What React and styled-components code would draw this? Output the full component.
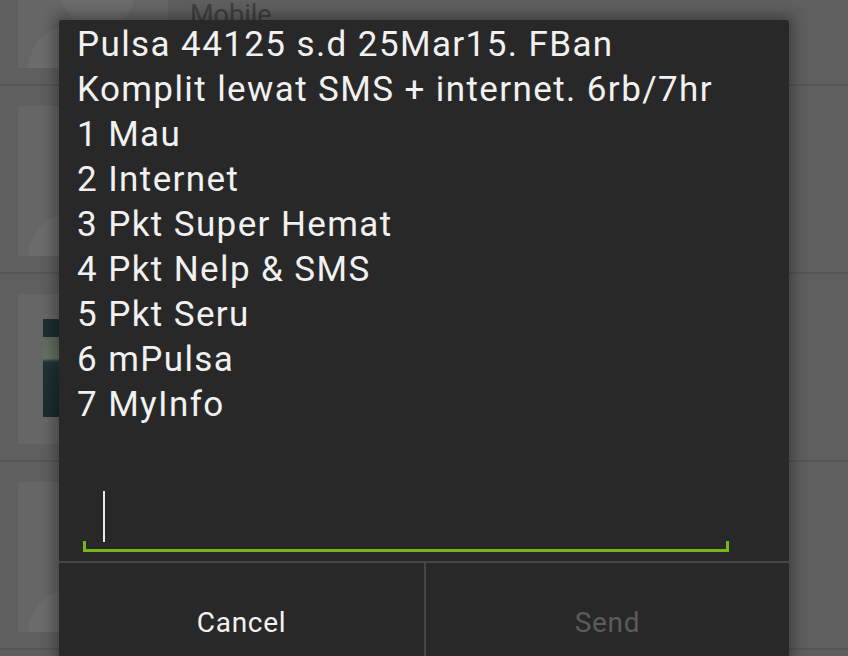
import React from "react";
import styled, { createGlobalStyle } from "styled-components";

const Global = createGlobalStyle`
  html, body { margin: 0; padding: 0; background: #606060; }
  body { width: 848px; height: 656px; overflow: hidden; font-family: Roboto, "Noto Sans", sans-serif; }
  * { box-sizing: border-box; }
`;

const Screen = styled.div`
  position: relative;
  width: 848px;
  height: 656px;
  overflow: hidden;
  background: #5f5f5f;
`;

const ContactList = styled.div`
  display: flex;
  flex-direction: column;
  margin-top: -102px;
`;

const ContactRow = styled.div`
  display: flex;
  align-items: flex-start;
  gap: 22px;
  height: 188px;
  padding: 20px 0 0 18px;
  border-bottom: 2px solid #565656;
`;

const Avatar = styled.div`
  position: relative;
  flex: none;
  width: 150px;
  height: 150px;
  background: #666666;
  overflow: hidden;
`;

const Photo = styled.div`
  position: absolute;
  left: 25px;
  top: 25px;
  width: 100px;
  height: 98px;
  background: linear-gradient(
    to bottom,
    #1c2f33 0%,
    #1c2f33 18%,
    #5e6a5e 18%,
    #6b7262 40%,
    #1f3438 44%,
    #1a2c30 100%
  );
`;

const Info = styled.div`
  display: flex;
  flex-direction: column;
  padding-top: 80px;
`;

const Label = styled.div`
  font-size: 27px;
  line-height: 34px;
  color: #3e3e3e;
`;

const Dialog = styled.div`
  position: absolute;
  left: 59px;
  top: 20px;
  width: 730px;
  height: 700px;
  background: #282828;
  border-radius: 3px 3px 0 0;
  box-shadow: 0 0 14px 5px rgba(0, 0, 0, 0.32);
  display: flex;
  flex-direction: column;
`;

const Message = styled.div`
  padding: 2px 18px 0 18px;
  font-family: Roboto, "Noto Sans", sans-serif;
  font-size: 35px;
  letter-spacing: 1.4px;
  line-height: 45px;
  color: #f1f1f1;
  white-space: pre-line;
`;

const InputField = styled.div`
  position: relative;
  margin: 52px 60px 0 24px;
  height: 73px;
  padding: 12px 0 0 20px;
  border-bottom: 3px solid #7bb31a;
  &::before,
  &::after {
    content: "";
    position: absolute;
    bottom: -3px;
    width: 3px;
    height: 11px;
    background: #7bb31a;
  }
  &::before { left: 0; }
  &::after { right: 0; }
`;

const Cursor = styled.div`
  width: 2px;
  height: 51px;
  background: #e8e8e8;
`;

const ButtonBar = styled.div`
  display: grid;
  grid-template-columns: 365px 1fr;
  margin-top: 9px;
  border-top: 2px solid #464646;
`;

const DialogButton = styled.div`
  height: 120px;
  display: flex;
  align-items: center;
  justify-content: center;
  padding-bottom: 2px;
  font-family: Roboto, "Noto Sans", sans-serif;
  font-size: 28px;
  letter-spacing: 0.7px;
  color: ${(p) => (p.$disabled ? "#5b5b5b" : "#f2f2f2")};
  & + & { border-left: 2px solid #464646; }
`;

const Silhouette = () => (
  <svg width="150" height="150" viewBox="0 0 150 150" style={{ position: "absolute", left: 0, top: 0 }}>
    <circle cx="80" cy="72" r="38" fill="#6c6c6c" />
    <path d="M10 150 C 14 112, 44 104, 80 104 C 116 104, 146 112, 150 150 Z" fill="#6c6c6c" />
  </svg>
);

const message = `Pulsa 44125 s.d 25Mar15. FBan
Komplit lewat SMS + internet. 6rb/7hr
1 Mau
2 Internet
3 Pkt Super Hemat
4 Pkt Nelp & SMS
5 Pkt Seru
6 mPulsa
7 MyInfo`;

export default function App() {
  return (
    <>
      <Global />
      <Screen>
        <ContactList>
          <ContactRow>
            <Avatar><Silhouette /></Avatar>
            <Info>
              <Label>Mobile</Label>
            </Info>
          </ContactRow>
          <ContactRow>
            <Avatar><Silhouette /></Avatar>
          </ContactRow>
          <ContactRow>
            <Avatar><Photo /></Avatar>
          </ContactRow>
          <ContactRow>
            <Avatar><Silhouette /></Avatar>
          </ContactRow>
        </ContactList>
        <Dialog>
          <Message>{message}</Message>
          <InputField>
            <Cursor />
          </InputField>
          <ButtonBar>
            <DialogButton>Cancel</DialogButton>
            <DialogButton $disabled>Send</DialogButton>
          </ButtonBar>
        </Dialog>
      </Screen>
    </>
  );
}
